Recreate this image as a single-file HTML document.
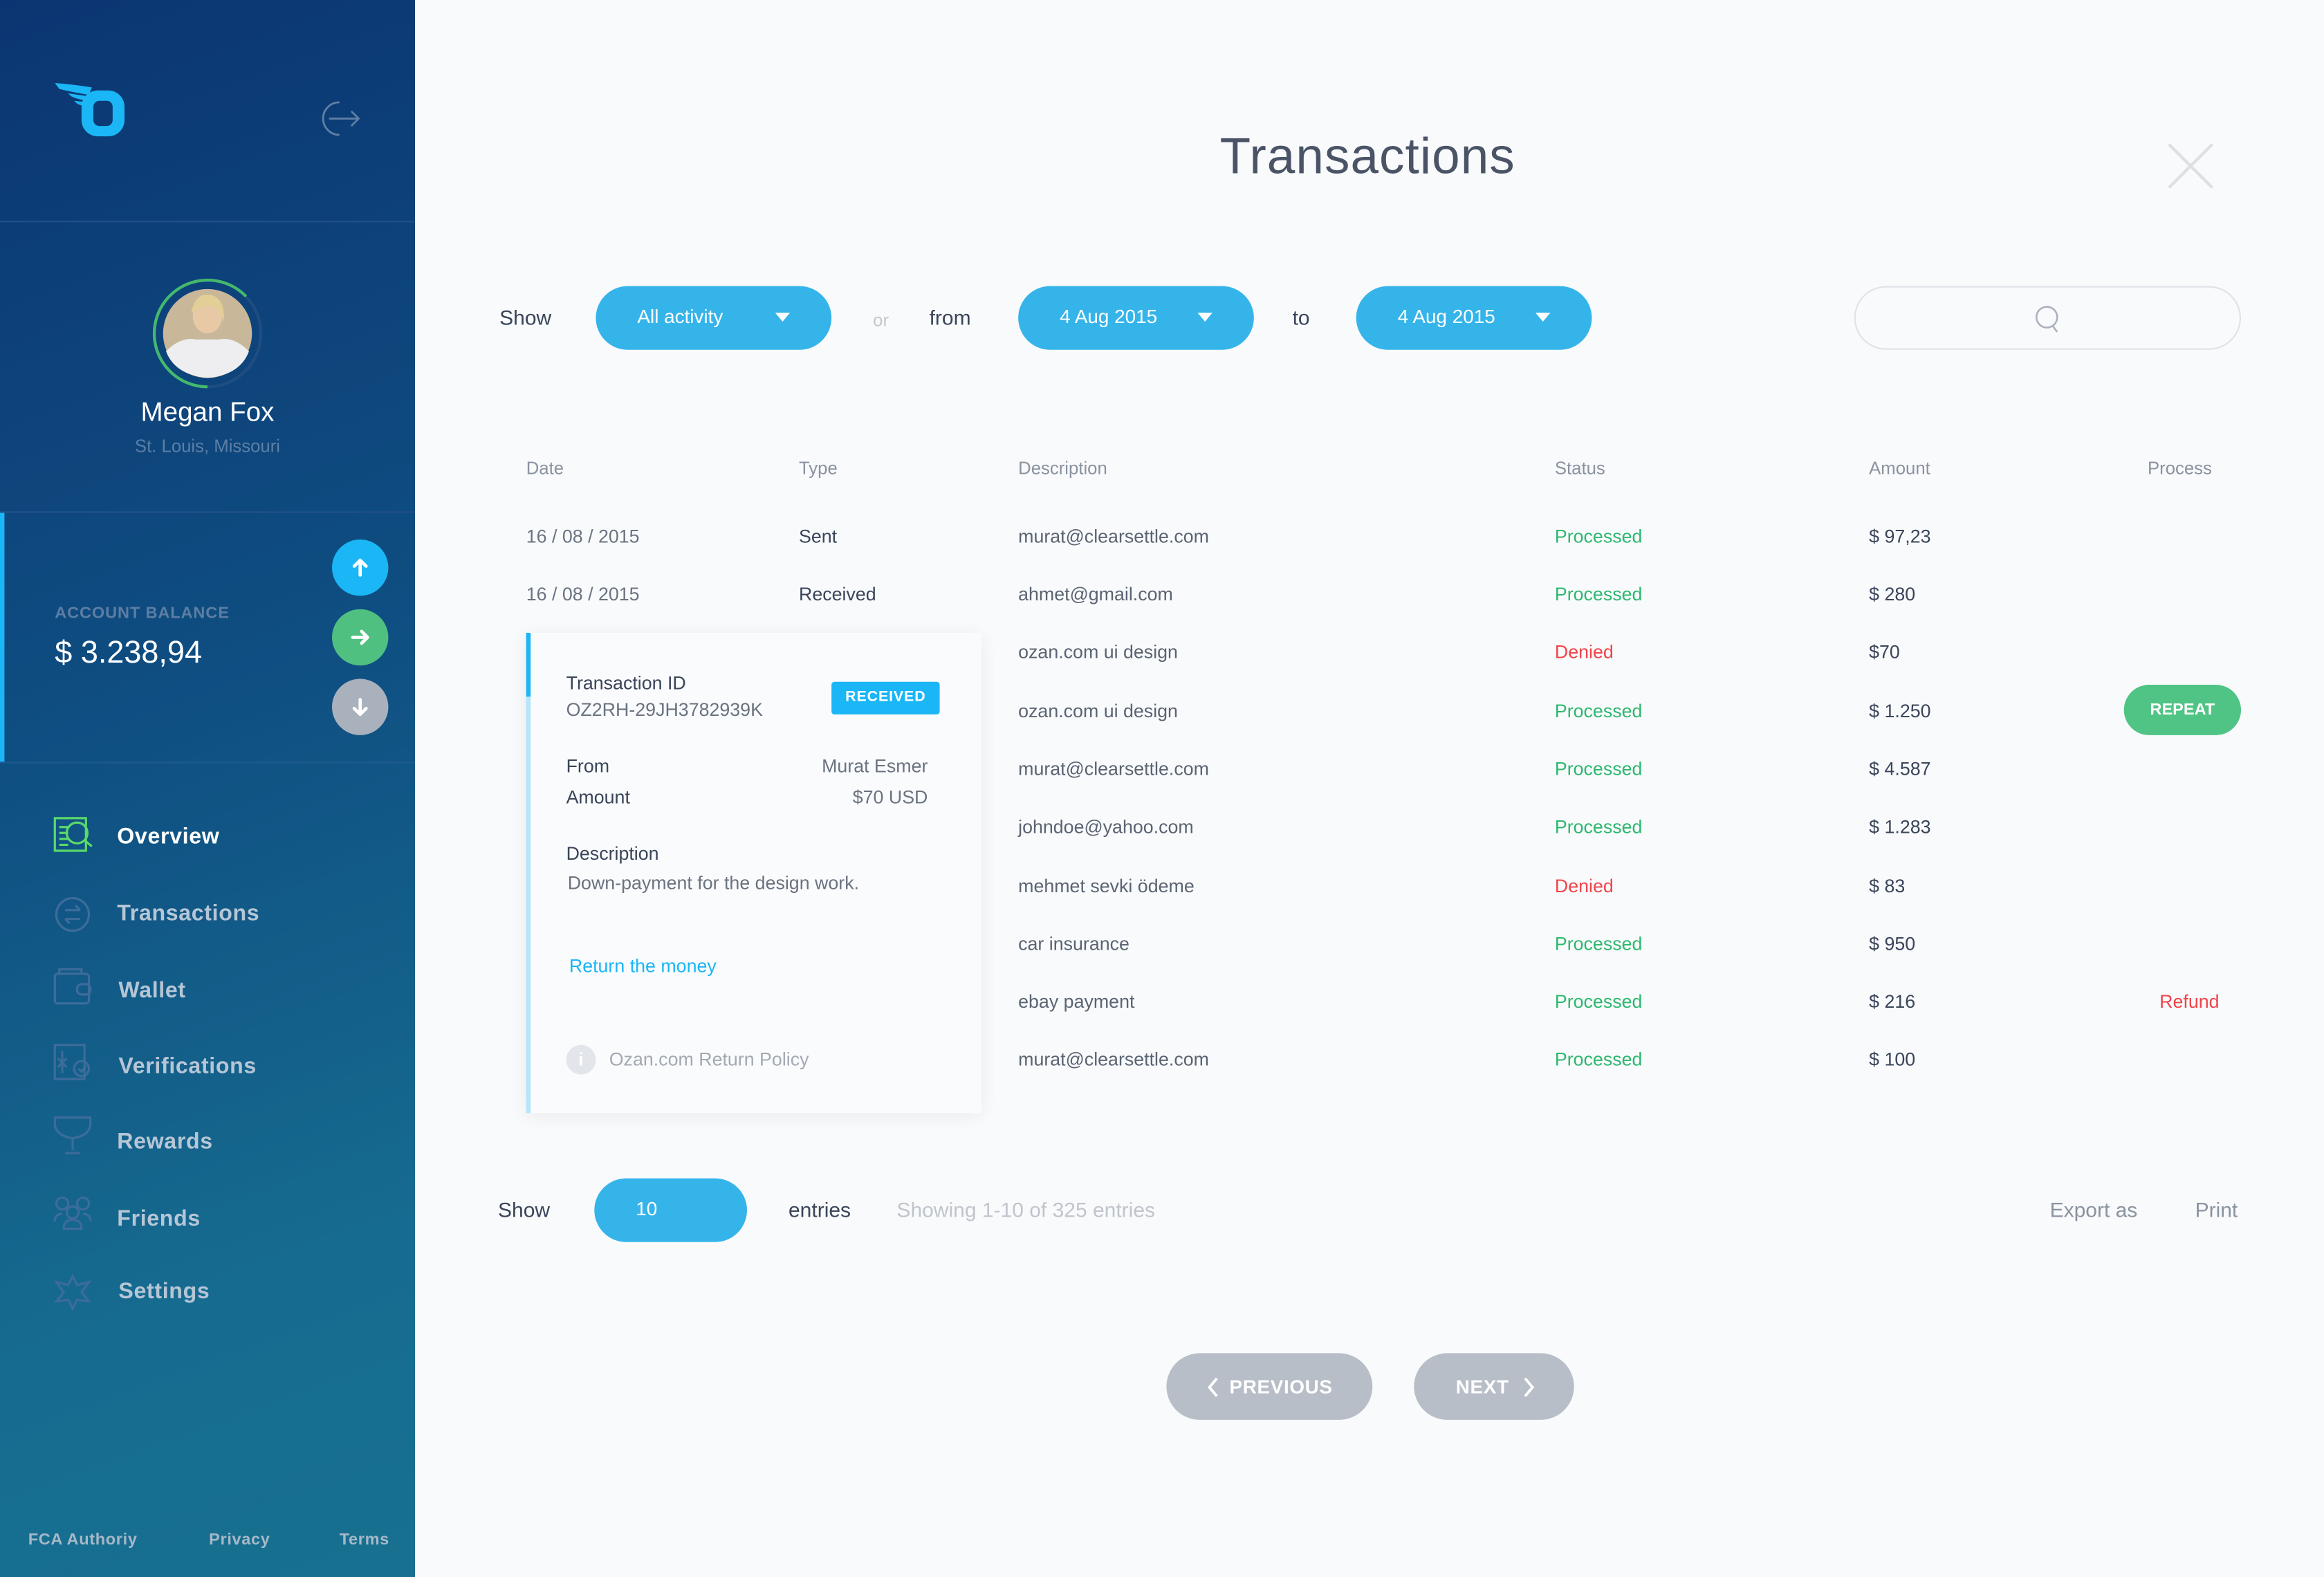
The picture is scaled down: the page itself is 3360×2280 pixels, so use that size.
<!DOCTYPE html>
<html><head><meta charset="utf-8">
<style>
html,body{margin:0;padding:0;width:3360px;height:2280px;overflow:hidden;background:#f9fafc;}
#root{position:absolute;left:0;top:0;width:1568px;height:1064px;transform:scale(2.142857);transform-origin:0 0;font-family:"Liberation Sans",sans-serif;color:#3a4559;}
.a{position:absolute;white-space:nowrap;}
.t{height:20px;line-height:20px;font-size:12.5px;}
#side{position:absolute;left:0;top:0;width:280px;height:1064px;background:linear-gradient(160deg,#0b3572 0%,#0f4f82 45%,#166c90 80%,#17708f 100%);}
.nav{color:#b6c6d6;font-size:15px;font-weight:bold;letter-spacing:0.3px;}
.btn{position:absolute;background:#35b4ea;border-radius:22px;color:#fff;font-size:13px;}
.hd{color:#8a93a0;font-size:12px;}
.g{color:#2db86e;} .r{color:#f0444a;}
.circ{position:absolute;width:38px;height:38px;border-radius:50%;}
.pg{position:absolute;background:#b8bec7;border-radius:23px;color:#fff;font-weight:bold;font-size:13px;text-align:center;line-height:45px;height:45px;letter-spacing:0.3px;}
</style></head><body><div id="root">
<div id="side">
  <svg class="a" style="left:36px;top:55px" width="50" height="40" viewBox="0 0 50 40">
    <path d="M1 1 Q14 2 26 4 L24 9 Q12 7 4 5 Z" fill="#1bb6f5"/>
    <path d="M10 8 L24 10 L23 13 Q16 12 12 10 Z" fill="#1bb6f5"/>
    <path d="M14 13 L23 14 L22 17 Q18 16 16 15 Z" fill="#1bb6f5"/>
    <rect x="19" y="6" width="29" height="31" rx="11" fill="#1bb6f5"/>
    <rect x="27" y="13" width="13" height="17" rx="4" fill="#0c3a74"/>
  </svg>
  <svg class="a" style="left:213px;top:67px" width="32" height="26" viewBox="0 0 32 26" fill="none" stroke="#5f7fa5" stroke-width="1.3">
    <path d="M16 2 A11 11 0 1 0 16 24"/><path d="M9 13 H29 M24 8 L29 13 L24 18"/>
  </svg>
  <div class="a" style="left:0;top:149px;width:280px;height:1px;background:#21508a"></div>
  <svg class="a" style="left:102px;top:187px" width="76" height="76" viewBox="0 0 76 76">
    <circle cx="38" cy="38" r="36" fill="none" stroke="#1f4d82" stroke-width="2"/>
    <path d="M38 74 A36 36 0 1 1 64 13" fill="none" stroke="#43b96e" stroke-width="2"/>
    <circle cx="38" cy="38" r="30" fill="#c9b79a"/>
    <path d="M10 50 Q20 40 30 42 L46 42 Q56 40 66 50 Q60 66 38 68 Q16 66 10 50Z" fill="#eeeef0"/>
    <ellipse cx="38" cy="26" rx="10" ry="12" fill="#e8c9a6"/>
    <path d="M27 24 Q30 10 40 12 Q50 14 49 30 L46 22 Q38 16 30 22 Z" fill="#e3cf95"/>
  </svg>
  <div class="a" style="left:0;width:280px;text-align:center;top:268px;color:#fff;font-size:18px">Megan Fox</div>
  <div class="a" style="left:0;width:280px;text-align:center;top:294px;color:#5c7ea5;font-size:12px">St. Louis, Missouri</div>
  <div class="a" style="left:0;top:345px;width:280px;height:1px;background:#21508a"></div>
  <div class="a" style="left:0;top:346px;width:3px;height:168px;background:#1bb6f5"></div>
  <div class="a" style="left:37px;top:408px;color:#5d7ea3;font-size:11px;font-weight:bold;letter-spacing:0.4px">ACCOUNT BALANCE</div>
  <div class="a" style="left:37px;top:429px;color:#fff;font-size:21px">$ 3.238,94</div>
  <div class="circ" style="left:224px;top:364px;background:#1bb6f5"></div>
  <div class="circ" style="left:224px;top:411px;background:#4fc080"></div>
  <div class="circ" style="left:224px;top:458px;background:#a9b1bd"></div>
  <svg class="a" style="left:224px;top:364px" width="38" height="132" viewBox="0 0 38 132" fill="none" stroke="#fff" stroke-width="2.2" stroke-linecap="round" stroke-linejoin="round">
    <path d="M19 24 V14 M15 18 L19 14 L23 18"/>
    <path d="M14 66 H24 M20 62 L24 66 L20 70"/>
    <path d="M19 108 V118 M15 114 L19 118 L23 114"/>
  </svg>
  <div class="a" style="left:0;top:514px;width:280px;height:1px;background:#1d5a8e"></div>
  <svg class="a" style="left:36px;top:550px" width="30" height="340" viewBox="0 0 30 340" fill="none" stroke-width="1.5">
    <g stroke="#5bd96a"><rect x="1" y="2" width="21" height="22"/><path d="M4 8 H10 M4 12 H10 M4 16 H10 M4 20 H10"/><circle cx="16" cy="12" r="7"/><path d="M21 17 L26 21"/></g>
    <g stroke="#3d6c9a"><circle cx="13" cy="67" r="11"/><path d="M8 64 H18 M15 61 L18 64 M18 70 H8 M11 73 L8 70"/></g>
    <g stroke="#3d6c9a"><rect x="1" y="107" width="23" height="20" rx="2"/><path d="M4 107 V104 H19 V107"/><rect x="16" y="114" width="9" height="7" rx="3"/></g>
    <g stroke="#3d6c9a"><rect x="1" y="155" width="20" height="23"/><path d="M6 159 V174 M3 164 L6 167 L9 164 M3 170 L6 167 L9 170"/><circle cx="19" cy="171" r="5"/><path d="M17 171 L19 173 L22 169"/></g>
    <g stroke="#3d6c9a"><path d="M1 204 H25 V208 Q25 216 13 218 Q1 216 1 208 Z M13 218 V226 M8 228 H18"/></g>
    <g stroke="#3d6c9a"><circle cx="6" cy="262" r="4"/><circle cx="20" cy="262" r="4"/><circle cx="13" cy="268" r="4"/><path d="M1 274 Q1 269 6 269 M25 274 Q25 269 20 269 M7 279 Q7 273 13 273 Q19 273 19 279 Z"/></g>
    <g stroke="#3d6c9a"><path d="M13 311 L16 317 L24 315 L19 322 L24 328 L16 327 L13 333 L10 327 L2 328 L7 322 L2 315 L10 317 Z"/></g>
  </svg>
  <div class="a nav" style="left:79px;top:556px;color:#fff">Overview</div>
  <div class="a nav" style="left:79px;top:608px">Transactions</div>
  <div class="a nav" style="left:80px;top:660px">Wallet</div>
  <div class="a nav" style="left:80px;top:711px">Verifications</div>
  <div class="a nav" style="left:79px;top:762px">Rewards</div>
  <div class="a nav" style="left:79px;top:814px">Friends</div>
  <div class="a nav" style="left:80px;top:863px">Settings</div>
  <div class="a" style="left:19px;top:1033px;color:#a7b8c8;font-size:11px;font-weight:bold;letter-spacing:0.3px">FCA Authoriy</div>
  <div class="a" style="left:141px;top:1033px;color:#a7b8c8;font-size:11px;font-weight:bold;letter-spacing:0.3px">Privacy</div>
  <div class="a" style="left:229px;top:1033px;color:#a7b8c8;font-size:11px;font-weight:bold;letter-spacing:0.3px">Terms</div>
</div>

<div class="a" style="left:823px;top:87px;font-size:34px;color:#4a5466;letter-spacing:0.5px">Transactions</div>
<svg class="a" style="left:1462px;top:96px" width="32" height="32" viewBox="0 0 32 32" stroke="#dedfe2" stroke-width="2" stroke-linecap="round"><path d="M2 2 L30 30 M30 2 L2 30"/></svg>

<div class="a" style="left:337px;top:206px;font-size:14px">Show</div>
<div class="btn" style="left:402px;top:193px;width:159px;height:43px"><span class="a" style="left:28px;top:13px">All activity</span></div>
<div class="a" style="left:589px;top:209px;font-size:12px;color:#c4c8ce">or</div>
<div class="a" style="left:627px;top:206px;font-size:14px">from</div>
<div class="btn" style="left:687px;top:193px;width:159px;height:43px"><span class="a" style="left:28px;top:13px">4 Aug 2015</span></div>
<div class="a" style="left:872px;top:206px;font-size:14px">to</div>
<div class="btn" style="left:915px;top:193px;width:159px;height:43px"><span class="a" style="left:28px;top:13px">4 Aug 2015</span></div>
<svg class="a" style="left:0;top:0" width="1568" height="1064" viewBox="0 0 1568 1064" fill="#fff">
  <path d="M523 211 L533 211 L528 217 Z M808 211 L818 211 L813 217 Z M1036 211 L1046 211 L1041 217 Z M466 813 L476 813 L471 819 Z"/>
</svg>
<div class="a" style="left:1251px;top:193px;width:259px;height:41px;border:1px solid #dfe2e7;border-radius:22px"></div>
<svg class="a" style="left:1371px;top:205px" width="22" height="20" viewBox="0 0 22 20" fill="none" stroke="#aab2bd" stroke-width="1.2"><circle cx="10" cy="9" r="7"/><path d="M14 15 L17 19"/></svg>

<div class="a t hd" style="left:355px;top:306px">Date</div>
<div class="a t hd" style="left:539px;top:306px">Type</div>
<div class="a t hd" style="left:687px;top:306px">Description</div>
<div class="a t hd" style="left:1049px;top:306px">Status</div>
<div class="a t hd" style="left:1261px;top:306px">Amount</div>
<div class="a t hd" style="left:1449px;top:306px">Process</div>

<div class="a t" style="left:355px;top:352px;color:#6a7380">16 / 08 / 2015</div><div class="a t" style="left:539px;top:352px">Sent</div><div class="a t" style="left:687px;top:352px;color:#5a6472">murat@clearsettle.com</div><div class="a t g" style="left:1049px;top:352px">Processed</div><div class="a t" style="left:1261px;top:352px">$ 97,23</div>
<div class="a t" style="left:355px;top:391px;color:#6a7380">16 / 08 / 2015</div><div class="a t" style="left:539px;top:391px">Received</div><div class="a t" style="left:687px;top:391px;color:#5a6472">ahmet@gmail.com</div><div class="a t g" style="left:1049px;top:391px">Processed</div><div class="a t" style="left:1261px;top:391px">$ 280</div>
<div class="a t" style="left:687px;top:430px;color:#5a6472">ozan.com ui design</div><div class="a t r" style="left:1049px;top:430px">Denied</div><div class="a t" style="left:1261px;top:430px">$70</div>
<div class="a t" style="left:687px;top:470px;color:#5a6472">ozan.com ui design</div><div class="a t g" style="left:1049px;top:470px">Processed</div><div class="a t" style="left:1261px;top:470px">$ 1.250</div>
<div class="a" style="left:1433px;top:462px;width:79px;height:34px;border-radius:17px;background:#4fc484;color:#fff;font-weight:bold;font-size:11px;text-align:center;line-height:34px">REPEAT</div>
<div class="a t" style="left:687px;top:509px;color:#5a6472">murat@clearsettle.com</div><div class="a t g" style="left:1049px;top:509px">Processed</div><div class="a t" style="left:1261px;top:509px">$ 4.587</div>
<div class="a t" style="left:687px;top:548px;color:#5a6472">johndoe@yahoo.com</div><div class="a t g" style="left:1049px;top:548px">Processed</div><div class="a t" style="left:1261px;top:548px">$ 1.283</div>
<div class="a t" style="left:687px;top:588px;color:#5a6472">mehmet sevki ödeme</div><div class="a t r" style="left:1049px;top:588px">Denied</div><div class="a t" style="left:1261px;top:588px">$ 83</div>
<div class="a t" style="left:687px;top:627px;color:#5a6472">car insurance</div><div class="a t g" style="left:1049px;top:627px">Processed</div><div class="a t" style="left:1261px;top:627px">$ 950</div>
<div class="a t" style="left:687px;top:666px;color:#5a6472">ebay payment</div><div class="a t g" style="left:1049px;top:666px">Processed</div><div class="a t" style="left:1261px;top:666px">$ 216</div><div class="a t r" style="left:1457px;top:666px">Refund</div>
<div class="a t" style="left:687px;top:705px;color:#5a6472">murat@clearsettle.com</div><div class="a t g" style="left:1049px;top:705px">Processed</div><div class="a t" style="left:1261px;top:705px">$ 100</div>

<div class="a" style="left:355px;top:427px;width:307px;height:324px;background:#fafbfd;box-shadow:0 2px 12px rgba(0,0,0,0.07);border-left:3px solid #b3e5fb;box-sizing:border-box"></div>
<div class="a" style="left:355px;top:427px;width:3px;height:43px;background:#1bb6f5"></div>
<div class="a t" style="left:382px;top:451px">Transaction ID</div>
<div class="a t" style="left:382px;top:469px;color:#6a7380">OZ2RH-29JH3782939K</div>
<div class="a" style="left:561px;top:460px;width:73px;height:22px;background:#1bb6f5;border-radius:2px;color:#fff;font-size:10px;font-weight:bold;text-align:center;line-height:22px;letter-spacing:0.4px">RECEIVED</div>
<div class="a t" style="left:382px;top:507px">From</div>
<div class="a t" style="left:382px;top:528px">Amount</div>
<div class="a t" style="left:540px;top:507px;width:86px;text-align:right;color:#6a7380">Murat Esmer</div>
<div class="a t" style="left:540px;top:528px;width:86px;text-align:right;color:#6a7380">$70 USD</div>
<div class="a t" style="left:382px;top:566px">Description</div>
<div class="a t" style="left:383px;top:586px;color:#6a7380">Down-payment for the design work.</div>
<div class="a t" style="left:384px;top:642px;color:#1bb6f5">Return the money</div>
<div class="a" style="left:382px;top:705px;width:20px;height:20px;border-radius:50%;background:#e2e5ea;color:#fff;font-size:12px;font-weight:bold;text-align:center;line-height:20px">i</div>
<div class="a t" style="left:411px;top:705px;color:#a3a9b2">Ozan.com Return Policy</div>

<div class="a" style="left:336px;top:808px;font-size:14px">Show</div>
<div class="btn" style="left:401px;top:795px;width:103px;height:43px"><span class="a" style="left:28px;top:13px">10</span></div>
<div class="a" style="left:532px;top:808px;font-size:14px">entries</div>
<div class="a" style="left:605px;top:808px;font-size:14px;color:#c0c5cc">Showing 1-10 of 325 entries</div>
<div class="a" style="left:1383px;top:808px;font-size:14px;color:#8a93a0">Export as</div>
<div class="a" style="left:1481px;top:808px;font-size:14px;color:#8a93a0">Print</div>

<div class="pg" style="left:787px;top:913px;width:139px">&nbsp;&nbsp;&nbsp;&nbsp;PREVIOUS</div>
<div class="pg" style="left:954px;top:913px;width:108px">NEXT&nbsp;&nbsp;&nbsp;&nbsp;</div>
<svg class="a" style="left:0;top:0" width="1568" height="1064" viewBox="0 0 1568 1064" fill="none" stroke="#fff" stroke-width="1.8">
  <path d="M821 930 L816 936 L821 942 M1029 930 L1034 936 L1029 942"/>
</svg>
</div></body></html>
